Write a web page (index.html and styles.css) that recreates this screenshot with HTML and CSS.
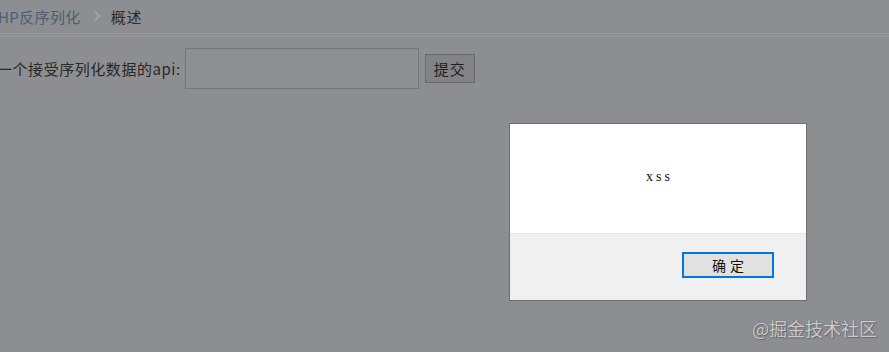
FILE: index.html
```html
<!DOCTYPE html>
<html lang="zh-CN">
<head>
<meta charset="utf-8">
<title>概述</title>
<link rel="stylesheet" href="styles.css">
</head>
<body>
<div class="page">
  <div class="crumbs">
    <a class="crumb-link" href="#">PHP反序列化</a>
    <span class="crumb-sep">
      <svg width="8" height="10" viewBox="0 0 8 10"><path d="M2 1 L6 5 L2 9" fill="none" stroke="#a3a4a7" stroke-width="1.6"/></svg>
    </span>
    <span class="crumb-current">概述</span>
  </div>
  <div class="rule"></div>
  <form class="form-row">
    <label class="label">一个接受序列化数据的api:</label>
    <input class="field" type="text">
    <button class="submit" type="button">提交</button>
  </form>
</div>

<div class="dialog">
  <div class="dialog-body">xss</div>
  <div class="dialog-foot">
    <button class="ok" type="button">确定</button>
  </div>
</div>

<div class="watermark">@掘金技术社区</div>
</body>
</html>
```

FILE: styles.css
```css
html, body {
  margin: 0;
  padding: 0;
  height: 100%;
}
body {
  background: #8d8e91;
  font-family: "Noto Sans CJK SC", "Noto Sans", sans-serif;
  color: #2a2b2d;
  overflow: hidden;
}
.page {
  width: 889px;
}
.crumbs {
  height: 32px;
  display: flex;
  align-items: center;
  margin-left: -12px;
  font-size: 15px;
  letter-spacing: 0.4px;
  border-bottom: 1px solid #9a9b9e;
  padding-bottom: 1px;
  box-sizing: content-box;
}
.crumb-link {
  color: #4d5f6e;
  text-decoration: none;
}
.crumb-sep {
  display: flex;
  align-items: center;
  margin: 0 10px 0 12px;
}
.crumb-current {
  color: #2a2b2d;
  letter-spacing: 0.8px;
}
.rule {
  margin-top: 2px;
  border-top: 1px solid #999a9d;
}
.form-row {
  display: flex;
  align-items: center;
  margin: 11px 0 0 -3px;
}
.label {
  font-size: 15px;
  line-height: 20px;
  letter-spacing: 0.55px;
  margin-right: 4px;
  color: #27282a;
}
.field {
  width: 234px;
  height: 41px;
  box-sizing: border-box;
  border: 1px solid #76777a;
  background: #8e8f92;
  margin: 0;
  padding: 0;
}
.submit {
  margin-left: 6px;
  width: 50px;
  height: 29px;
  box-sizing: border-box;
  background: #828386;
  border: 1px solid #68696c;
  font-family: "Noto Sans CJK SC", sans-serif;
  font-size: 15px;
  letter-spacing: 1px;
  color: #1f2022;
  padding: 0;
  line-height: 27px;
}
.dialog {
  position: absolute;
  left: 509px;
  top: 123px;
  width: 298px;
  height: 178px;
  box-sizing: border-box;
  border: 1px solid #6e6e70;
  background: #ffffff;
  display: flex;
  flex-direction: column;
}
.dialog-body {
  height: 110px;
  box-sizing: border-box;
  display: flex;
  align-items: center;
  justify-content: center;
  font-family: "Liberation Serif", serif;
  font-size: 14px;
  letter-spacing: 3px;
  padding-left: 3px;
  padding-bottom: 4px;
  color: #111;
  border-bottom: 1px solid #e6e6e6;
}
.dialog-foot {
  flex: 1;
  background: #f0f0f0;
  display: flex;
  justify-content: flex-end;
  align-items: flex-start;
  padding: 18px 32px 0 0;
}
.ok {
  width: 92px;
  height: 26px;
  box-sizing: border-box;
  border: 2px solid #0078d7;
  background: #e1e1e1;
  font-family: "Noto Sans CJK SC", sans-serif;
  font-size: 14px;
  letter-spacing: 4px;
  text-indent: 4px;
  color: #111;
  padding: 0;
  line-height: 20px;
}
.watermark {
  position: absolute;
  right: 12px;
  top: 316px;
  font-size: 18px;
  line-height: 24px;
  color: #c9cacd;
  text-shadow: 0 0 1px #5d5e61, 1px 1px 1px #6a6b6e;
}
```
